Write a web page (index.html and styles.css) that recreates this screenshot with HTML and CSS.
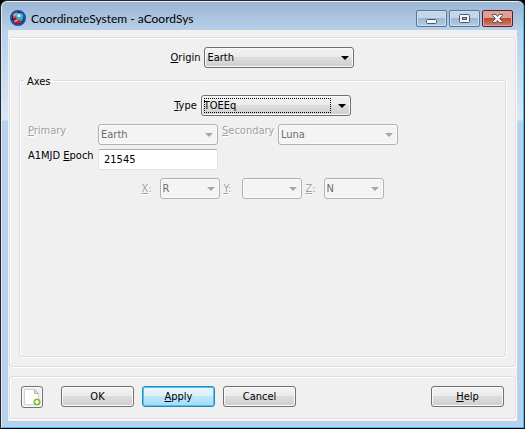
FILE: index.html
```html
<!DOCTYPE html>
<html lang="en">
<head>
<meta charset="utf-8">
<title>CoordinateSystem - aCoordSys</title>
<link rel="stylesheet" href="styles.css">
</head>
<body>
<div class="window">
  <header class="titlebar">
    <svg class="app-icon" viewBox="0 0 16 16" aria-hidden="true">
      <circle cx="8" cy="8" r="7" fill="#16204a" stroke="#1c4fa8" stroke-width="2"/>
      <path d="M3 4.500Q6 1.500 8.500 3L7 7 3.500 8.500Z" fill="#b8a48c"/>
      <path d="M3 11Q5 7.500 8 8.500L12 12Q8 15 4.500 12.500Z" fill="#d8202c"/>
      <path d="M4 6l4 3" stroke="#e03038" stroke-width="1.500"/>
      <circle cx="9.800" cy="6.500" r="3.600" fill="#35b4d8"/>
      <circle cx="9" cy="5.500" r="1.500" fill="#d8f4fa"/>
      <path d="M10 11q2-.5 3-2.500" stroke="#3aa860" stroke-width="1.500" fill="none"/>
      <path d="M4.500 11.500l3-1.500" stroke="#eee" stroke-width="1"/>
    </svg>
    <h1 class="title">CoordinateSystem - aCoordSys</h1>
    <div class="caption-buttons">
      <button class="caption" type="button" aria-label="Minimize">
        <svg viewBox="0 0 29 15"><rect x="9.500" y="8.500" width="10" height="4" rx="1" fill="#f6f6f6" stroke="#535666"/></svg>
      </button>
      <button class="caption" type="button" aria-label="Maximize">
        <svg viewBox="0 0 29 15"><rect x="9.500" y="3.500" width="10" height="8" rx="1" fill="#f6f6f6" stroke="#535666"/><rect x="12.500" y="6.500" width="4" height="2" fill="#86a9cf" stroke="#535666"/></svg>
      </button>
      <button class="caption close" type="button" aria-label="Close">
        <svg viewBox="0 0 29 15"><path d="M9.500 3.500h3.500l1.500 2 1.500-2h3.500v1l-3 3 3 3v1H16l-1.500-2-1.500 2H9.500v-1l3-3-3-3z" fill="#f6f6f6" stroke="#535666"/></svg>
      </button>
    </div>
  </header>
  <form class="client">
    <section class="panel main">
      <div class="row">
        <label for="origin"><u>O</u>rigin</label>
        <span class="combo wide"><select id="origin"><option>Earth</option></select></span>
      </div>
      <fieldset class="axes">
        <legend>Axes</legend>
        <div class="row">
          <label for="type"><u>T</u>ype</label>
          <span class="combo wide focused"><select id="type"><option>TOEEq</option></select></span>
        </div>
        <div class="fields">
          <label class="off" for="primary"><u>P</u>rimary</label>
          <span class="combo medium disabled"><select id="primary" disabled><option>Earth</option></select></span>
          <label class="off" for="secondary"><u>S</u>econdary</label>
          <span class="combo medium disabled"><select id="secondary" disabled><option>Luna</option></select></span>
          <label for="epoch">A1MJD <u>E</u>poch</label>
          <input class="text" id="epoch" type="text" value="21545">
        </div>
        <div class="row xyz">
          <label class="off" for="x"><u>X</u>:</label>
          <span class="combo small disabled"><select id="x" disabled><option>R</option></select></span>
          <label class="off" for="y"><u>Y</u>:</label>
          <span class="combo small disabled"><select id="y" disabled><option></option></select></span>
          <label class="off" for="z"><u>Z</u>:</label>
          <span class="combo small disabled"><select id="z" disabled><option>N</option></select></span>
        </div>
      </fieldset>
    </section>
    <footer class="panel actions">
      <button class="btn icon" type="button" aria-label="Show script">
        <svg viewBox="0 0 20 20">
          <path d="M2.500 2.500h10l4 4v11h-14z" fill="#fff" stroke="#d2d2d2"/>
          <path d="M12.500 2.500v4h4z" fill="#e4e4e4" stroke="#b4b4b4"/>
          <circle cx="15" cy="15" r="3.500" fill="#84bd35"/>
          <path d="M13 15h4M15 13v4" stroke="#fff" stroke-width="1.500"/>
        </svg>
      </button>
      <button class="btn" type="button">OK</button>
      <button class="btn default" type="button"><u>A</u>pply</button>
      <button class="btn" type="button">Cancel</button>
      <button class="btn help" type="button"><u>H</u>elp</button>
    </footer>
  </form>
</div>
</body>
</html>
```
FILE: styles.css
```css
* { box-sizing: border-box; }

body {
  margin: 0;
  background: #000;
  color: #000;
  font: 11px/14px Tahoma, "DejaVu Sans Condensed", sans-serif;
}

.window {
  display: flex;
  flex-direction: column;
  min-height: 100vh;
  padding: 0 7px 7px;
  border: 1px solid #26282c;
  border-bottom-color: #000;
  border-radius: 7px 7px 0 0;
  background: linear-gradient(#99b4d1, #b9d1ea 30px, #dbe7f4 119px, #b9d1ea 120px);
  box-shadow: inset 0 1px #e8f2fb, inset 1px 0 #d8e8f6, inset -1px -1px #35c4e8;
}

.titlebar {
  display: flex;
  align-items: flex-start;
  height: 29px;
  padding: 9px 2px 0;
}

.app-icon { width: 16px; height: 16px; }

.title {
  flex: 1;
  margin: 0 0 0 5px;
  font: 12px/18px "Segoe UI", Lato, sans-serif;
}

.caption-buttons { display: flex; gap: 2px; margin-right: 2px; }

.caption {
  width: 31px;
  height: 17px;
  padding: 0;
  border: 1px solid #5b7595;
  border-radius: 2px;
  background: linear-gradient(#c3d6eb 50%, #9bb7d7 50%, #b4cde6);
  box-shadow: inset 0 0 0 1px #cadcee;
}

.caption svg { display: block; width: 29px; height: 15px; }

.close {
  border-color: #53212b;
  background: linear-gradient(#dda092 45%, #bb4a34 50%, #d08068);
  box-shadow: inset 0 0 0 1px #dda598;
}

.client {
  flex: 1;
  display: flex;
  flex-direction: column;
  gap: 9px;
  margin: 0;
  padding: 7px 1px 2px;
  background: #f0f0f0;
}

.panel, .axes {
  border: 1px solid #d5dfe5;
  border-radius: 3px;
  box-shadow: inset 1px 1px #fff, 1px 1px #fff;
}

.main {
  flex: 1;
  display: flex;
  flex-direction: column;
  padding: 9px;
}

.row { display: flex; justify-content: center; align-items: center; gap: 4px; }

.combo { position: relative; display: block; height: 21px; }
.wide { width: 150px; }
.medium { width: 120px; }
.small { width: 60px; }

.combo select {
  display: block;
  width: 100%;
  height: 100%;
  padding: 0 16px 0 2px;
  border: 1px solid #707070;
  border-radius: 3px;
  appearance: none;
  background: linear-gradient(#f2f2f2, #ebebeb 50%, #dddddd 50%, #cfcfcf);
  box-shadow: inset 0 0 0 1px #fafafa;
  color: #000;
  font: inherit;
  opacity: 1;
}

.combo::after {
  content: "";
  position: absolute;
  top: 9px;
  right: 5px;
  border: solid transparent;
  border-width: 4px 4px 0;
  border-top-color: #000;
}

.focused::before {
  content: "";
  position: absolute;
  inset: 3px 20px 3px 3px;
  border: 1px dotted #000;
  pointer-events: none;
}

.combo.disabled select { border-color: #adb2b5; background: #f4f4f4; color: #6d6d6d; }
.combo.disabled::after { border-top-color: #a6a6a6; }

.off { color: #a0a0a0; text-shadow: 1px 1px #fff; }

.axes {
  flex: 1;
  min-width: 0;
  margin: 4px 0 0;
  padding: 6px 8px;
}

.axes legend { margin-left: -4px; padding: 3px 3px 0; }

.fields {
  display: grid;
  grid-template-columns: 66px 120px 52px 120px;
  gap: 4px;
  margin-top: 8px;
}

.text {
  width: 120px;
  height: 21px;
  padding: 0 5px;
  border: 1px solid #e2e3ea;
  border-top-color: #abadb3;
  border-radius: 2px;
  background: #fff;
  color: #000;
  font: inherit;
}

.xyz { margin-top: 8px; }
.xyz label { width: 14px; }

.actions { display: flex; gap: 8px; padding: 9px 11px 10px; }

.btn {
  width: 73px;
  height: 21px;
  padding: 0;
  border: 1px solid #707070;
  border-radius: 3px;
  background: linear-gradient(#f2f2f2, #ebebeb 50%, #dddddd 50%, #cfcfcf);
  box-shadow: inset 0 0 0 1px #fafafa;
  color: #000;
  font: inherit;
}

.icon { width: 22px; height: 22px; margin-right: 10px; background: #efefef; }
.icon svg { display: block; width: 20px; height: 20px; }

.default {
  border-color: #3c7fb1;
  background: linear-gradient(#eaf6fd, #d9f0fc 50%, #bee6fd 50%, #a7d9f5);
  box-shadow: inset 0 0 0 1px #3fcbf8;
}

.help { margin-left: auto; }
```
